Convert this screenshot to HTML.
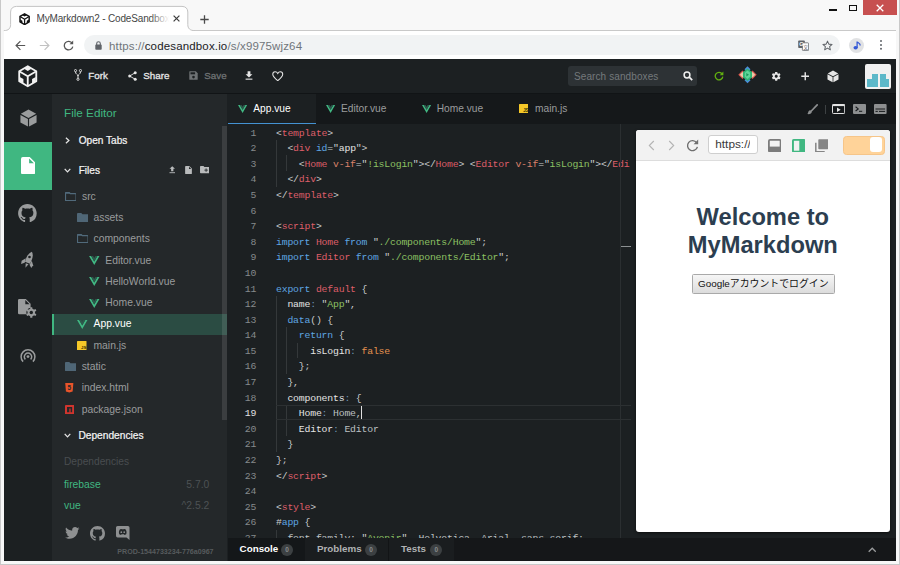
<!DOCTYPE html>
<html lang="ja">
<head>
<meta charset="utf-8">
<title>MyMarkdown2 - CodeSandbox</title>
<style>
*{box-sizing:border-box;margin:0;padding:0}
html,body{width:900px;height:565px;overflow:hidden;background:#fff}
body{font-family:"Liberation Sans","Noto Sans CJK JP",sans-serif;position:relative}
.abs{position:absolute}
#win{position:absolute;left:0;top:0;width:900px;height:565px;background:#f7f7f7;overflow:hidden}
#edgeL{left:0;top:0;width:1px;height:565px;background:#c9c9c9}
#edgeR{left:899px;top:0;width:1px;height:565px;background:#c9c9c9}
#edgeB{left:0;top:564px;width:900px;height:1px;background:#c9c9c9}
/* chrome */
#strip{left:1px;top:0;width:898px;height:31px;background:#f8f8f8}
#tab{left:10.5px;top:6px;width:177.5px;height:26px;background:#fff;border:1px solid #c3c3c3;border-bottom:none;border-radius:7px 7px 0 0}
#stripline{left:194px;top:30.200px;width:702px;height:1px;background:#c9c9c9}
#toolbar{left:4px;top:31.200px;width:892px;height:28px;background:#fff}
#omni{left:84px;top:35px;width:756px;height:20px;background:#f1f3f4;border-radius:10px}
.ctxt{font-size:10.5px;color:#444;white-space:nowrap;line-height:12px}
/* app */
#app{left:4px;top:59px;width:892px;height:502px;background:#1c2022;overflow:hidden}
#hdr{left:0;top:0;width:892px;height:35px;background:#1c2022;border-bottom:1px solid #111416}
.hbtn{font-size:9.8px;-webkit-text-stroke:0.3px currentColor;color:#e6e6e6;white-space:nowrap;line-height:12px}
#act{left:0;top:35px;width:48px;height:467px;background:#1c2022}
#actsel{left:0;top:82.8px;width:47.5px;height:47.800px;background:#40b781}
#side{left:47.500px;top:35px;width:175.500px;height:467px;background:#24282a}
#sbar{left:217.500px;top:66.600px;width:5.500px;height:294px;background:rgba(255,255,255,0.105)}
.st{font-size:10.35px;white-space:nowrap;line-height:12px;color:#9a9c9d}
.sh{font-size:10.1px;white-space:nowrap;line-height:12px;color:#f4f4f4;-webkit-text-stroke:0.22px currentColor}
#tabs{left:224px;top:35px;width:668px;height:29.7px;background:#15181a}
#atab{left:224px;top:35px;width:88px;height:29.7px;background:#1c2022;border-bottom:1.8px solid #4492d2}
.tt{font-size:10.2px;white-space:nowrap;line-height:12px;color:#9a9c9d}
#code{left:224px;top:65px;width:406.500px;height:414.200px;overflow:hidden;background:#1c2022}
.ln{position:absolute;left:0;width:28.1px;text-align:right;font:9.8px/15.59px "Liberation Mono",monospace;letter-spacing:-0.18px;color:#868a8c}
.cl{position:absolute;left:48px;font:9.8px/15.59px "Liberation Mono",monospace;letter-spacing:-0.18px;color:#d0d0d0;white-space:pre}
.ig{position:absolute;width:1px;background:#34383a}.p{color:#c8cbcc}.c{color:#6f95b5}.ln.cur{color:#e2e2e2}
.r{color:#de5e69}.b{color:#5fa6e2}.g{color:#8cc063}.o{color:#e5924f}.a{color:#d8806a}.w{color:#e4e4e4}.d{color:#bcc0c3}
#ruler{left:615.5px;top:65px;width:1px;height:414.2px;background:#2b2f31}
#prevwrap{left:626.5px;top:65px;width:265.5px;height:414.2px;background:#1c2022}
#prev{left:631.8px;top:70.800px;width:254.500px;height:402px;background:#fff;border-radius:3px;box-shadow:0 1px 3px rgba(0,0,0,.6);overflow:hidden}
#ptool{left:0;top:0;width:254px;height:31px;background:#f2f2f2;border-bottom:1px solid #ddd}
#bot{left:224px;top:479.200px;width:668px;height:22.800px;background:#151719}
.bt{font-size:9.800px;font-weight:bold;white-space:nowrap;line-height:12px;color:#b0b2b3}
.badge{width:12px;height:12px;border-radius:6px;background:#3c4042;color:#8a8d8f;font-size:6.500px;line-height:12px;text-align:center;font-weight:bold}
</style>
</head>
<body>
<div id="win">
<div class="abs" id="strip"></div>
<div class="abs" id="stripline"></div>
<svg class="abs" style="left:0;top:0" width="200" height="33" viewBox="0 0 200 33"><path d="M3.800 31.200 C8.500 31 10.600 28.500 10.600 24.500 V12 C10.600 8.500 13 6.400 16.500 6.400 H182 C185.500 6.400 187.800 8.500 187.800 12 V24.500 C187.800 28.500 190 31 194.600 31.200 V33 H3.800 Z" fill="#fff"/><path d="M3.800 30.700 C8.500 30.500 10.600 28.500 10.600 24.500 V12 C10.600 8.500 13 6.400 16.500 6.400 H182 C185.500 6.400 187.800 8.500 187.800 12 V24.500 C187.800 28.500 190 30.500 194.600 30.700" fill="none" stroke="#c4c4c4" stroke-width="1"/></svg>
<div class="abs" id="toolbar"></div>
<div class="abs" id="omni"></div>
<!--CHROME-->
<svg class="abs" style="left:19px;top:12.500px" width="11.200" height="12.400" viewBox="0 0 24 28"><path d="M12 1.800 L22.400 7.800 V20.200 L12 26.200 L1.600 20.200 V7.800 Z" fill="#fff" stroke="#111" stroke-width="3.200" stroke-linejoin="round"/><path d="M12 14 V26 M12 14 L1.800 8 M12 14 L22.200 8" stroke="#111" stroke-width="2.800" fill="none"/><path d="M12 2 L17 4.900 L12 8 L7 4.900 Z" fill="#111"/><path d="M2 14.500 L7 17.300 V23.500 L2 20.600 Z M22 14.500 L17 17.300 V23.500 L22 20.600 Z" fill="#111"/></svg>
<div class="abs ctxt" id="ttitle" style="left:36.5px;top:12.5px;width:132px;overflow:hidden;font-size:10px;letter-spacing:-0.17px;color:#454545">MyMarkdown2 - CodeSandbox</div>
<div class="abs" style="left:150px;top:10px;width:19px;height:18px;background:linear-gradient(90deg,rgba(255,255,255,0),#fff)"></div>
<svg class="abs" style="left:172.5px;top:15px" width="7" height="7" viewBox="0 0 7 7"><path d="M0.6 0.6 L6.4 6.4 M6.4 0.6 L0.6 6.4" stroke="#3c3c3c" stroke-width="1.2"/></svg>
<svg class="abs" style="left:200px;top:14.5px" width="9" height="9" viewBox="0 0 9 9"><path d="M4.5 0.3 V8.7 M0.3 4.5 H8.7" stroke="#4a4a4a" stroke-width="1.3"/></svg>
<!-- window controls -->
<div class="abs" style="left:829px;top:9.200px;width:8px;height:1.500px;background:#111"></div>
<div class="abs" style="left:848.5px;top:4.5px;width:8.800px;height:6.500px;border:1.100px solid #111;border-top-width:1.700px"></div>
<div class="abs" style="left:863px;top:0;width:33.5px;height:15px;background:#c75050"></div>
<svg class="abs" style="left:875.5px;top:4px" width="8" height="8" viewBox="0 0 8 8"><path d="M0.7 0.7 L7.3 7.3 M7.3 0.7 L0.7 7.3" stroke="#fff" stroke-width="1.3"/></svg>
<!-- nav -->
<svg class="abs" style="left:15px;top:40px" width="11" height="11" viewBox="0 0 11 11"><path d="M10.2 5.5 H1.3 M5.4 1.2 L1.1 5.5 L5.4 9.8" fill="none" stroke="#555" stroke-width="1.2"/></svg>
<svg class="abs" style="left:38.5px;top:40px" width="11" height="11" viewBox="0 0 11 11"><path d="M0.8 5.5 H9.7 M5.6 1.2 L9.9 5.5 L5.6 9.8" fill="none" stroke="#c2c2c2" stroke-width="1.2"/></svg>
<svg class="abs" style="left:62.5px;top:40px" width="11" height="11" viewBox="0 0 11 11"><path d="M9.2 3.2 A4.3 4.3 0 1 0 9.8 6.6" fill="none" stroke="#555" stroke-width="1.25"/><path d="M10.2 0.6 V4.3 H6.5 Z" fill="#555"/></svg>
<svg class="abs" style="left:94.5px;top:40.5px" width="7" height="9" viewBox="0 0 7 9"><rect x="0.3" y="3.6" width="6.4" height="5.2" rx="0.8" fill="#5f6368"/><path d="M1.7 4 V2.6 A1.8 1.8 0 0 1 5.3 2.6 V4" fill="none" stroke="#5f6368" stroke-width="1.1"/></svg>
<div class="abs ctxt" id="url" style="left:109px;top:39.5px;font-size:11.5px;letter-spacing:0.15px;color:#70757a">https://<span style="color:#202124">codesandbox.io</span>/s/x9975wjz64</div>
<!-- translate -->
<svg class="abs" style="left:797.5px;top:39.5px" width="11" height="11" viewBox="0 0 11 11"><rect x="0.2" y="0.4" width="6.6" height="7.6" rx="0.8" fill="#5f6368"/><rect x="4.4" y="2.8" width="6.2" height="7.8" rx="0.8" fill="#fff" stroke="#5f6368" stroke-width="0.8"/><text x="1.3" y="6.3" font-size="5.5" font-weight="bold" fill="#fff" font-family="Liberation Sans, sans-serif">G</text><text x="5.3" y="9" font-size="5" fill="#5f6368" font-family="Noto Sans CJK JP, sans-serif">文</text></svg>
<svg class="abs" style="left:821.5px;top:39.5px" width="11" height="11" viewBox="0 0 24 24"><path d="M12 2.5 L14.9 9 L22 9.7 L16.6 14.4 L18.2 21.4 L12 17.7 L5.8 21.4 L7.4 14.4 L2 9.7 L9.1 9 Z" fill="none" stroke="#5f6368" stroke-width="2.2" stroke-linejoin="round"/></svg>
<div class="abs" style="left:849px;top:37.5px;width:15px;height:15px;border-radius:8px;background:#e1e2e4"></div>
<svg class="abs" style="left:852.5px;top:40.5px" width="8" height="9" viewBox="0 0 8 9"><ellipse cx="2.6" cy="6.8" rx="2.1" ry="1.7" fill="#3559d6"/><path d="M4.1 7 V0.6 C4.6 2 7.3 1.6 7.2 4.4" fill="none" stroke="#3559d6" stroke-width="1.3"/></svg>
<div class="abs" style="left:879.5px;top:40.4px;width:2px;height:2px;border-radius:1px;background:#5f6368;box-shadow:0 3.9px 0 #5f6368,0 7.8px 0 #5f6368"></div>
<!--/CHROME-->
<div class="abs" id="app">
<div class="abs" id="hdr"></div>
<!--HEADER-->
<svg class="abs" style="left:14px;top:6px" width="19.500" height="22.500" viewBox="0 0 24 28"><path d="M12 1.600 L22.600 7.700 V20.300 L12 26.400 L1.400 20.300 V7.700 Z" fill="#1c2022" stroke="#f2f2f2" stroke-width="2.300" stroke-linejoin="round"/><path d="M12 14 V26 M12 14 L1.800 8 M12 14 L22.200 8" stroke="#f2f2f2" stroke-width="2.300" fill="none"/><path d="M12 2 L16.600 4.700 L12 7.600 L7.400 4.700 Z" fill="#f2f2f2"/><path d="M2 14.800 L6.600 17.400 V23 L2 20.400 Z M22 14.800 L17.400 17.400 V23 L22 20.400 Z" fill="#f2f2f2"/></svg>
<!-- fork -->
<svg class="abs" style="left:69.5px;top:10.300px" width="8" height="12" viewBox="0 0 8 12"><circle cx="1.5" cy="1.6" r="1.1" fill="none" stroke="#e6e6e6" stroke-width="0.9"/><circle cx="6.5" cy="1.6" r="1.1" fill="none" stroke="#e6e6e6" stroke-width="0.9"/><circle cx="4" cy="10.3" r="1.1" fill="none" stroke="#e6e6e6" stroke-width="0.9"/><path d="M1.5 2.8 C1.5 5.5 4 5 4 7.2 V9.2 M6.5 2.8 C6.5 5.5 4 5 4 7.2" fill="none" stroke="#e6e6e6" stroke-width="1"/></svg>
<div class="abs hbtn" id="hfork" style="left:84.3px;top:10.800px">Fork</div>
<!-- share -->
<svg class="abs" style="left:124px;top:11.800px" width="9" height="10" viewBox="0 0 9 10"><circle cx="7.2" cy="1.7" r="1.5" fill="#e6e6e6"/><circle cx="1.7" cy="5" r="1.5" fill="#e6e6e6"/><circle cx="7.2" cy="8.3" r="1.5" fill="#e6e6e6"/><path d="M7.2 1.7 L1.7 5 L7.2 8.3" fill="none" stroke="#e6e6e6" stroke-width="0.9"/></svg>
<div class="abs hbtn" id="hshare" style="left:139.3px;top:10.800px">Share</div>
<!-- save -->
<svg class="abs" style="left:184.5px;top:12.300px" width="9" height="9" viewBox="0 0 9 9"><path d="M0.8 0.3 H6.8 L8.7 2.2 V8.2 Q8.7 8.7 8.2 8.7 H0.8 Q0.3 8.7 0.3 8.2 V0.8 Q0.3 0.3 0.8 0.3 Z" fill="#6f7375"/><rect x="1.5" y="1.3" width="4.6" height="2" fill="#1c2022"/><circle cx="4.5" cy="6.1" r="1.3" fill="#1c2022"/></svg>
<div class="abs hbtn" id="hsave" style="left:200.3px;top:10.800px;color:#6f7375">Save</div>
<!-- download -->
<svg class="abs" style="left:241px;top:11.800px" width="8" height="9" viewBox="0 0 8 9"><path d="M2.6 0.3 H5.4 V3.3 H7.4 L4 6.6 L0.6 3.3 H2.6 Z" fill="#e6e6e6"/><rect x="0.6" y="7.6" width="6.8" height="1.1" fill="#e6e6e6"/></svg>
<!-- heart -->
<svg class="abs" style="left:268px;top:11.800px" width="11.500" height="10.500" viewBox="0 0 24 22"><path d="M12 20.3 C3 13 1.6 9.8 1.6 6.8 C1.6 3.6 4 1.6 6.6 1.6 C8.8 1.6 10.8 2.8 12 5 C13.2 2.8 15.2 1.6 17.4 1.6 C20 1.6 22.4 3.6 22.4 6.8 C22.4 9.8 21 13 12 20.3 Z" fill="none" stroke="#e6e6e6" stroke-width="2.2"/></svg>
<!-- search -->
<div class="abs" style="left:564.3px;top:6.8px;width:128.5px;height:20.4px;border-radius:3px;background:#2d3235"></div>
<div class="abs" id="hsearch" style="left:570px;top:11.5px;font-size:10px;line-height:12px;color:#74797c;white-space:nowrap;letter-spacing:0.1px">Search sandboxes</div>
<svg class="abs" style="left:678.5px;top:12px" width="10" height="10" viewBox="0 0 10 10"><circle cx="4" cy="4" r="2.9" fill="none" stroke="#f0f0f0" stroke-width="1.5"/><path d="M6.2 6.2 L9.2 9.2" stroke="#f0f0f0" stroke-width="1.7"/></svg>
<!-- refresh -->
<svg class="abs" style="left:709.5px;top:12px" width="10" height="10" viewBox="0 0 10 10"><path d="M8.2 3 A3.8 3.8 0 1 0 8.8 5.6" fill="none" stroke="#62b010" stroke-width="1.3"/><path d="M9.4 0.5 V4.2 H5.7 Z" fill="#62b010"/></svg>
<!-- patron diamond -->
<svg class="abs" style="left:734px;top:7px" width="19" height="17.5" viewBox="0 0 19 17.5"><path d="M9.5 0.3 L12.5 3.3 L9.5 6.3 L6.5 3.3 Z" fill="#4a8fd9"/><path d="M9.5 17.2 L12.5 14.2 L9.5 11.200 L6.500 14.200 Z" fill="#4a8fd9"/><path d="M0.3 8.75 L4.500 4.600 L8.600 8.750 L4.500 12.900 Z" fill="#d9584f"/><path d="M18.700 8.750 L14.500 4.600 L10.400 8.750 L14.500 12.900 Z" fill="#d9584f"/><path d="M1.800 8.750 L4.500 6.100 L7.100 8.750 L4.500 11.400 Z" fill="#e8c9a8"/><path d="M17.200 8.750 L14.500 6.100 L11.900 8.750 L14.500 11.400 Z" fill="#e8c9a8"/><path d="M9.5 2.600 L14 6 V11.500 L9.500 14.900 L5 11.500 V6 Z" fill="#2fb573"/><path d="M9.5 4.600 L12.200 6.800 V10.700 L9.500 12.900 L6.800 10.700 V6.800 Z" fill="#5fd69a"/><path d="M8.300 7 L11 8.750 L8.300 10.500 Z" fill="#1f9a5c"/></svg>
<!-- gear -->
<svg class="abs" style="left:767px;top:12px" width="10.5" height="10.5" viewBox="0 0 24 24"><path fill="#e6e6e6" d="M19.4 13c0-.3.1-.7.1-1s0-.7-.1-1l2.100-1.700c.2-.2.200-.400.100-.600l-2-3.500c-.100-.200-.400-.300-.600-.200l-2.500 1c-.5-.4-1.100-.700-1.700-1l-.400-2.600c0-.2-.2-.4-.5-.4h-4c-.300 0-.500.200-.500.400l-.400 2.600c-.600.300-1.200.6-1.700 1l-2.500-1c-.2-.1-.5 0-.6.2l-2 3.500c-.1.200-.1.500.1.600l2.100 1.700c0 .3-.1.700-.1 1s0 .7.100 1l-2.100 1.700c-.2.200-.2.400-.1.600l2 3.500c.1.200.4.300.6.200l2.500-1c.5.400 1.100.7 1.700 1l.4 2.600c0 .2.200.4.500.4h4c.3 0 .5-.2.500-.4l.4-2.600c.6-.3 1.200-.6 1.700-1l2.500 1c.2.100.5 0 .6-.2l2-3.500c.1-.2.1-.5-.1-.6L19.400 13zM12 15.500c-1.900 0-3.500-1.600-3.500-3.500s1.600-3.500 3.500-3.500 3.500 1.600 3.500 3.500-1.600 3.500-3.500 3.500z"/></svg>
<!-- plus -->
<svg class="abs" style="left:796.5px;top:13px" width="8.5" height="8.5" viewBox="0 0 9 9"><path d="M4.5 0.3 V8.700 M0.3 4.500 H8.700" stroke="#e6e6e6" stroke-width="1.5"/></svg>
<!-- cube -->
<svg class="abs" style="left:823px;top:11px" width="12" height="12.5" viewBox="0 0 24 25"><path d="M12 1 L22.500 6.800 L12 12.400 L1.500 6.800 Z" fill="#e6e6e6"/><path d="M1 8.500 L11.200 14 V24.600 L1 19 Z" fill="#e6e6e6"/><path d="M23 8.500 L12.800 14 V24.600 L23 19 Z" fill="#e6e6e6"/></svg>
<!-- avatar -->
<div class="abs" style="left:861px;top:4.6px;width:25.8px;height:25.6px;border-radius:2px;background:#f1f1f1"></div>
<div class="abs" style="left:863px;top:20px;width:5.2px;height:8.400px;background:#5cb8c9"></div>
<div class="abs" style="left:868px;top:15px;width:5.800px;height:13.4px;background:#5cb8c9"></div>
<div class="abs" style="left:876px;top:15px;width:5.600px;height:13.4px;background:#5cb8c9"></div>
<div class="abs" style="left:881.5px;top:20px;width:3.600px;height:8.4px;background:#5cb8c9"></div>
<!--/HEADER-->
<div class="abs" id="act"></div>
<div class="abs" id="actsel"></div>
<!--ACT-->
<svg class="abs" style="left:15.5px;top:50px" width="17" height="18" viewBox="0 0 24 25"><path d="M12 0.600 L22.800 6.600 L12 12.400 L1.200 6.600 Z" fill="#9a9c9d"/><path d="M0.600 8.200 L11.200 14 V24.600 L0.600 18.800 Z" fill="#9a9c9d"/><path d="M23.400 8.200 L12.800 14 V24.600 L23.400 18.800 Z" fill="#9a9c9d"/></svg>
<svg class="abs" style="left:16.8px;top:97.800px" width="14.2" height="17.400" viewBox="0 0 14 17"><path d="M1.800 0 H8.600 L14 5.400 V15.200 Q14 17 12.200 17 H1.800 Q0 17 0 15.200 V1.800 Q0 0 1.800 0 Z" fill="#fff"/><path d="M8 1.300 V6 H12.700 Z" fill="#40b781"/></svg>
<svg class="abs" style="left:14.2px;top:144.800px" width="18.800" height="18.600" viewBox="0 0 16 16"><path d="M8 0C3.58 0 0 3.58 0 8c0 3.54 2.29 6.53 5.47 7.59.4.07.55-.17.55-.38 0-.19-.01-.82-.01-1.49-2.01.37-2.53-.49-2.69-.94-.09-.23-.48-.94-.82-1.13-.28-.15-.68-.52-.01-.53.63-.01 1.08.58 1.24.82.72 1.21 1.87.87 2.33.66.07-.52.28-.87.51-1.07-1.78-.2-3.64-.89-3.64-3.95 0-.87.31-1.59.82-2.15-.08-.2-.36-1.02.08-2.12 0 0 .67-.21 2.2.82.64-.18 1.32-.27 2-.27.68 0 1.36.09 2 .27 1.53-1.04 2.2-.82 2.2-.82.44 1.1.16 1.92.08 2.12.51.56.82 1.27.82 2.15 0 3.07-1.87 3.75-3.65 3.95.29.25.54.73.54 1.48 0 1.07-.01 1.93-.01 2.2 0 .21.15.46.55.38A8.013 8.013 0 0016 8c0-4.42-3.58-8-8-8z" fill="#9a9c9d"/></svg>
<svg class="abs" style="left:16.500px;top:192.300px" width="15" height="18.500" viewBox="0 0 15 18.500"><g transform="rotate(22 7.500 9.250)" fill="#9a9c9d"><path d="M7.500 0 C10.300 2.600 10.800 6.600 10.200 12 H4.800 C4.200 6.600 4.700 2.600 7.500 0 Z"/><path d="M4.300 8.500 L1.300 12.200 L2 15.400 L4.900 13 Z"/><path d="M10.700 8.500 L13.700 12.200 L13 15.400 L10.100 13 Z"/><path d="M6 13 H9 L7.500 17.400 Z"/></g><circle cx="8.500" cy="6" r="1.300" fill="#1c2022"/></svg>
<svg class="abs" style="left:14.200px;top:239.800px" width="19" height="18.800" viewBox="0 0 19 18.800"><path d="M1.300 0 H7.800 L12.600 4.800 V9 C9.500 9 7.800 11.500 8.600 15.200 H1.300 Q0 15.200 0 13.900 V1.300 Q0 0 1.300 0 Z" fill="#9a9c9d"/><path d="M7.300 1 V5.300 H11.600 Z" fill="#1c2022"/><g transform="translate(13.300 13.500)"><g fill="#9a9c9d"><circle r="3.700"/><rect x="-1.100" y="-5.300" width="2.200" height="10.600" rx="0.500"/><rect x="-1.100" y="-5.300" width="2.200" height="10.600" rx="0.500" transform="rotate(60)"/><rect x="-1.100" y="-5.300" width="2.200" height="10.600" rx="0.500" transform="rotate(120)"/></g><circle r="1.700" fill="#1c2022"/></g></svg>
<svg class="abs" style="left:15.500px;top:289.200px" width="16" height="15" viewBox="0 0 16 15"><path d="M3.100 13.600 A6.900 6.900 0 1 1 12.900 13.600" fill="none" stroke="#9a9c9d" stroke-width="1.500"/><path d="M5.400 11.400 A3.700 3.700 0 1 1 10.600 11.400" fill="none" stroke="#9a9c9d" stroke-width="1.500"/><circle cx="8" cy="8.600" r="1.400" fill="#9a9c9d"/></svg>
<!--/ACT-->
<div class="abs" id="side"></div>
<!--SIDE-->
<div class="abs " id="fe" style="left:60.0px;top:48.2px;font-size:11.700px;line-height:12px;color:#40b781;white-space:nowrap">File Editor</div>
<svg class="abs" style="left:61.1px;top:78.0px" width="5" height="7" viewBox="0 0 5 7"><path d="M0.900 0.700 L3.900 3.500 L0.900 6.300" fill="none" stroke="#e6e6e6" stroke-width="1.250"/></svg>
<div class="abs sh" id="ot" style="left:74.7px;top:75.8px;">Open Tabs</div>
<svg class="abs" style="left:59.7px;top:109.0px" width="7" height="5" viewBox="0 0 7 5"><path d="M0.700 0.900 L3.500 3.900 L6.300 0.900" fill="none" stroke="#e6e6e6" stroke-width="1.250"/></svg>
<div class="abs sh" id="fl" style="left:74.7px;top:105.8px;">Files</div>
<svg class="abs" style="left:164.500px;top:107px" width="6.500" height="7.500" viewBox="0 0 8 9"><path d="M2.600 6.400 H5.400 V3.400 H7.400 L4 0.200 L0.600 3.400 H2.600 Z" fill="#b9bbbc"/><rect x="0.600" y="7.600" width="6.800" height="1.100" fill="#b9bbbc"/></svg>
<svg class="abs" style="left:180.500px;top:106.800px" width="7" height="8.200" viewBox="0 0 14 17"><path d="M1.800 0 H8.600 L14 5.400 V15.200 Q14 17 12.200 17 H1.800 Q0 17 0 15.200 V1.800 Q0 0 1.800 0 Z" fill="#b9bbbc"/><path d="M8 1.300 V6 H12.700 Z" fill="#24282a"/></svg>
<svg class="abs" style="left:196px;top:107.300px" width="9.300" height="7.300" viewBox="0 0 19 15"><path d="M1.500 0 H7 L9 2 H17.500 Q19 2 19 3.500 V13.500 Q19 15 17.500 15 H1.500 Q0 15 0 13.500 V1.500 Q0 0 1.500 0 Z" fill="#b9bbbc"/><path d="M12.500 5 V12 M9 8.500 H16" stroke="#24282a" stroke-width="1.800"/></svg>
<svg class="abs" style="left:60.8px;top:132.8px" width="11.600" height="9.200" viewBox="0 0 19 15"><path d="M1.800 0.800 H6.800 L8.800 2.800 H17.200 Q18.200 2.800 18.200 3.800 V13.200 Q18.200 14.200 17.200 14.200 H1.800 Q0.800 14.200 0.800 13.200 V1.800 Q0.800 0.800 1.800 0.800 Z" fill="none" stroke="#516a7b" stroke-width="2"/><path d="M1 1 H7 L9 3 H1 Z" fill="#516a7b"/></svg>
<div class="abs st" id="r0" style="left:78.0px;top:131.8px;">src</div>
<svg class="abs" style="left:72.7px;top:154.1px" width="11.600" height="9.200" viewBox="0 0 19 15"><path d="M1.500 0 H7 L9 2 H17.500 Q19 2 19 3.500 V13.500 Q19 15 17.500 15 H1.500 Q0 15 0 13.500 V1.500 Q0 0 1.500 0 Z" fill="#4f6676"/></svg>
<div class="abs st" id="r1" style="left:89.5px;top:153.1px;">assets</div>
<svg class="abs" style="left:72.7px;top:175.3px" width="11.600" height="9.200" viewBox="0 0 19 15"><path d="M1.800 0.800 H6.800 L8.800 2.800 H17.200 Q18.200 2.800 18.200 3.800 V13.200 Q18.200 14.200 17.200 14.200 H1.800 Q0.800 14.200 0.800 13.200 V1.800 Q0.800 0.800 1.800 0.800 Z" fill="none" stroke="#516a7b" stroke-width="2"/><path d="M1 1 H7 L9 3 H1 Z" fill="#516a7b"/></svg>
<div class="abs st" id="r2" style="left:89.5px;top:174.3px;">components</div>
<svg class="abs" style="left:85.0px;top:197.0px" width="10.5" height="9.1" viewBox="0 0 24 21"><path d="M0 0 H4.800 L12 12.500 L19.200 0 H24 L12 20.800 Z" fill="#41b883"/><path d="M4.800 0 H9.200 L12 4.900 L14.800 0 H19.200 L12 12.500 Z" fill="#2d5a4d"/></svg>
<div class="abs st" id="r3" style="left:101.3px;top:195.6px;">Editor.vue</div>
<svg class="abs" style="left:85.0px;top:218.3px" width="10.5" height="9.1" viewBox="0 0 24 21"><path d="M0 0 H4.800 L12 12.500 L19.200 0 H24 L12 20.800 Z" fill="#41b883"/><path d="M4.800 0 H9.200 L12 4.900 L14.800 0 H19.200 L12 12.500 Z" fill="#2d5a4d"/></svg>
<div class="abs st" id="r4" style="left:101.3px;top:216.9px;">HelloWorld.vue</div>
<svg class="abs" style="left:85.0px;top:239.6px" width="10.5" height="9.1" viewBox="0 0 24 21"><path d="M0 0 H4.800 L12 12.500 L19.200 0 H24 L12 20.800 Z" fill="#41b883"/><path d="M4.800 0 H9.200 L12 4.900 L14.800 0 H19.200 L12 12.500 Z" fill="#2d5a4d"/></svg>
<div class="abs st" id="r5" style="left:101.3px;top:238.2px;">Home.vue</div>
<div class="abs" style="left:47.500px;top:255.2px;width:175.500px;height:20.400px;background:#2b4c43;border-left:2px solid #40b781"></div>
<svg class="abs" style="left:73.4px;top:260.9px" width="10.5" height="9.1" viewBox="0 0 24 21"><path d="M0 0 H4.800 L12 12.500 L19.200 0 H24 L12 20.800 Z" fill="#41b883"/><path d="M4.800 0 H9.200 L12 4.900 L14.800 0 H19.200 L12 12.500 Z" fill="#2d5a4d"/></svg>
<div class="abs st" id="r6" style="left:89.5px;top:259.4px;color:#fff">App.vue</div>
<svg class="abs" style="left:73.4px;top:281.9px" width="9.5" height="9.5" viewBox="0 0 10 10"><rect width="10" height="10" rx="0.600" fill="#f5c828"/><text x="4.300" y="8.600" font-size="4.600" font-weight="bold" font-family="Liberation Sans, sans-serif" fill="#3a3000">JS</text></svg>
<div class="abs st" id="r7" style="left:89.5px;top:280.7px;">main.js</div>
<svg class="abs" style="left:60.6px;top:303.0px" width="11.600" height="9.200" viewBox="0 0 19 15"><path d="M1.500 0 H7 L9 2 H17.500 Q19 2 19 3.500 V13.500 Q19 15 17.500 15 H1.500 Q0 15 0 13.500 V1.500 Q0 0 1.500 0 Z" fill="#4f6676"/></svg>
<div class="abs st" id="r8" style="left:77.7px;top:302.0px;">static</div>
<svg class="abs" style="left:61.2px;top:324.3px" width="8.600" height="9.800" viewBox="0 0 18 20"><path d="M0.500 0 H17.500 L16 17.300 L9 19.600 L2 17.300 Z" fill="#e8542a"/><text x="5.300" y="14.800" font-size="13.500" font-weight="bold" font-family="Liberation Sans, sans-serif" fill="#24282a">5</text></svg>
<div class="abs st" id="r9" style="left:77.7px;top:323.2px;">index.html</div>
<svg class="abs" style="left:61.2px;top:345.9px" width="9.200" height="9.200" viewBox="0 0 10 10"><rect width="10" height="10" rx="0.500" fill="#d0352e"/><path d="M2.200 2.200 H7.800 V7.800 H6.100 V3.900 H4.700 V7.800 H2.200 Z" fill="#24282a"/></svg>
<div class="abs st" id="r10" style="left:77.7px;top:344.5px;">package.json</div>
<svg class="abs" style="left:59.7px;top:374.0px" width="7" height="5" viewBox="0 0 7 5"><path d="M0.700 0.900 L3.500 3.900 L6.300 0.900" fill="none" stroke="#e6e6e6" stroke-width="1.250"/></svg>
<div class="abs sh" id="dh" style="left:74.4px;top:370.6px;font-size:10.200px">Dependencies</div>
<div class="abs st" id="dd" style="left:60.0px;top:396.7px;color:#494d50;font-size:10.200px">Dependencies</div>
<div class="abs st" id="fb" style="left:60.0px;top:419.8px;color:#40b781">firebase</div>
<div class="abs st" id="fbv" style="left:150px;width:55.300px;text-align:right;top:419.8px;color:#4d5254">5.7.0</div>
<div class="abs st" id="vu" style="left:60.0px;top:441.1px;color:#40b781">vue</div>
<div class="abs st" id="vuv" style="left:150px;width:55.300px;text-align:right;top:441.1px;color:#4d5254">^2.5.2</div>
<svg class="abs" style="left:61px;top:468px" width="14.500" height="12" viewBox="0 0 24 20"><path d="M24 2.400c-.900.400-1.800.700-2.800.800 1-.600 1.800-1.600 2.200-2.700-1 .600-2 1-3.100 1.200C19.400.700 18.100.100 16.700.100c-2.700 0-4.900 2.200-4.900 4.900 0 .400 0 .800.100 1.100C7.800 5.900 4.200 4 1.700 1 1.300 1.700 1 2.600 1 3.500c0 1.700.900 3.200 2.200 4.100-.800 0-1.600-.200-2.200-.600v.100c0 2.400 1.700 4.400 3.900 4.800-.400.100-.800.200-1.300.200-.300 0-.600 0-.900-.100.600 2 2.400 3.400 4.600 3.400-1.700 1.300-3.800 2.100-6.100 2.100-.400 0-.800 0-1.200-.100 2.200 1.400 4.800 2.200 7.500 2.200 9.100 0 14-7.500 14-14v-.600c1-.700 1.800-1.600 2.500-2.600z" fill="#8e9091"/></svg>
<svg class="abs" style="left:86px;top:466.500px" width="15" height="15" viewBox="0 0 16 16"><path d="M8 0C3.58 0 0 3.58 0 8c0 3.54 2.29 6.53 5.47 7.59.4.07.55-.17.55-.38 0-.19-.01-.82-.01-1.49-2.01.37-2.53-.49-2.69-.94-.09-.23-.48-.94-.82-1.13-.28-.15-.68-.52-.01-.53.63-.01 1.08.58 1.24.82.72 1.21 1.87.87 2.33.66.07-.52.28-.87.51-1.07-1.78-.2-3.64-.89-3.64-3.95 0-.87.31-1.59.82-2.15-.08-.2-.36-1.02.08-2.12 0 0 .67-.21 2.2.82.64-.18 1.32-.27 2-.27.68 0 1.36.09 2 .27 1.53-1.04 2.2-.82 2.2-.82.44 1.1.16 1.92.08 2.12.51.56.82 1.27.82 2.15 0 3.07-1.87 3.75-3.65 3.95.29.25.54.73.54 1.48 0 1.07-.01 1.93-.01 2.2 0 .21.15.46.55.38A8.013 8.013 0 0016 8c0-4.42-3.58-8-8-8z" fill="#8e9091"/></svg>
<svg class="abs" style="left:112px;top:467px" width="13.500" height="14" viewBox="0 0 13.500 14"><path d="M1.600 0 H11.900 Q13.500 0 13.500 1.600 V14 L10.500 11.400 H1.600 Q0 11.400 0 9.800 V1.600 Q0 0 1.600 0 Z" fill="#8e9091"/><path d="M3.300 8.200 C2.600 6.300 3 4.500 3.800 3.400 C4.600 3 5.300 2.900 5.600 2.900 L5.800 3.300 H7.700 L7.900 2.900 C8.200 2.900 8.900 3 9.700 3.400 C10.500 4.500 10.900 6.300 10.200 8.200 C9.500 8.700 8.800 8.900 8.400 8.900 L8 8.300 H5.500 L5.100 8.900 C4.700 8.900 4 8.700 3.300 8.200 Z" fill="#24282a"/><circle cx="5.300" cy="6.200" r="0.850" fill="#8e9091"/><circle cx="8.200" cy="6.200" r="0.850" fill="#8e9091"/></svg>
<div class="abs" id="prod" style="left:113.300px;top:488.7px;font-size:7.1px;line-height:8px;font-weight:bold;color:#575b5d;white-space:nowrap">PROD-1544733234-776a0967</div>
<!--/SIDE-->
<div class="abs" id="sbar"></div>
<div class="abs" id="tabs"></div>
<div class="abs" id="atab"></div>
<!--TABS-->
<svg class="abs" style="left:234.3px;top:45.5px" width="9.2" height="8" viewBox="0 0 24 21"><path d="M0 0 H4.800 L12 12.500 L19.200 0 H24 L12 20.800 Z" fill="#41b883"/><path d="M4.800 0 H9.200 L12 4.900 L14.800 0 H19.200 L12 12.500 Z" fill="#2d5a4d"/></svg>
<div class="abs tt" id="t1" style="left:249.300px;top:43.500px;color:#fff">App.vue</div>
<svg class="abs" style="left:322px;top:45.500px" width="9.200" height="8" viewBox="0 0 24 21"><path d="M0 0 H4.800 L12 12.500 L19.200 0 H24 L12 20.800 Z" fill="#41b883"/><path d="M4.800 0 H9.200 L12 4.900 L14.800 0 H19.200 L12 12.500 Z" fill="#2d5a4d"/></svg>
<div class="abs tt" id="t2" style="left:337px;top:43.500px">Editor.vue</div>
<svg class="abs" style="left:417.700px;top:45.500px" width="9.200" height="8" viewBox="0 0 24 21"><path d="M0 0 H4.800 L12 12.500 L19.200 0 H24 L12 20.800 Z" fill="#41b883"/><path d="M4.800 0 H9.200 L12 4.900 L14.800 0 H19.200 L12 12.500 Z" fill="#2d5a4d"/></svg>
<div class="abs tt" id="t3" style="left:432.700px;top:43.500px">Home.vue</div>
<svg class="abs" style="left:514.600px;top:44.800px" width="9.600" height="9.600" viewBox="0 0 10 10"><rect width="10" height="10" rx="0.600" fill="#f5c828"/><text x="4.300" y="8.600" font-size="4.600" font-weight="bold" font-family="Liberation Sans, sans-serif" fill="#3a3000">JS</text></svg>
<div class="abs tt" id="t4" style="left:531px;top:43.500px">main.js</div>
<!-- right icons -->
<svg class="abs" style="left:802.500px;top:45.300px" width="11" height="10.500" viewBox="0 0 11 10.500"><path d="M10.200 0.900 L4.300 7" stroke="#8d8f90" stroke-width="1.700" stroke-linecap="round"/><path d="M3.300 6.300 L4.800 7.800 C4.800 9.900 2.600 10.500 0.200 10.100 C1.400 9.500 0.900 8.200 1.600 7.200 C2.100 6.500 2.800 6.200 3.300 6.300 Z" fill="#8d8f90"/></svg>
<div class="abs" style="left:820.700px;top:46px;width:1px;height:9px;background:#3d4143"></div>
<svg class="abs" style="left:828px;top:45.300px" width="13.200" height="10" viewBox="0 0 13.200 10"><rect x="0.500" y="0.500" width="12.200" height="9" rx="0.800" fill="none" stroke="#e4e4e4" stroke-width="1"/><rect x="0.500" y="0.300" width="12.200" height="1.800" fill="#e4e4e4"/><path d="M5 3.600 V7.900 L8.700 5.750 Z" fill="#e4e4e4"/></svg>
<svg class="abs" style="left:849px;top:45.300px" width="13" height="10" viewBox="0 0 13 10"><rect width="13" height="10" rx="1" fill="#8d8f90"/><path d="M2.600 2.800 L5.200 4.900 L2.600 7" fill="none" stroke="#16191b" stroke-width="1.100"/><path d="M6 7.300 H9.200" stroke="#16191b" stroke-width="1"/></svg>
<svg class="abs" style="left:870px;top:45.300px" width="12.600" height="10" viewBox="0 0 12.600 10"><rect width="12.600" height="10" rx="1" fill="#8d8f90"/><path d="M1.500 5 H11.100 M1.500 7.400 H3.800 M5 7.400 H11.100" stroke="#16191b" stroke-width="1"/></svg>
<!--/TABS-->
<div class="abs" id="code">
<!--CODE-->
<div class="ln" style="top:1.60px">1</div>
<div class="cl" style="top:1.60px"><span class="p">&lt;</span><span class="r">template</span><span class="p">&gt;</span></div>
<div class="ln" style="top:17.19px">2</div>
<div class="cl" style="top:17.19px"><span class="p">  &lt;</span><span class="r">div</span><span class="p"> </span><span class="b">id</span><span class="p">="</span><span class="w">app</span><span class="p">"&gt;</span></div>
<div class="ln" style="top:32.78px">3</div>
<div class="cl" style="top:32.78px"><span class="p">    &lt;</span><span class="r">Home</span><span class="p"> </span><span class="a">v-if</span><span class="p">="</span><span class="g">!isLogin</span><span class="p">"&gt;&lt;/</span><span class="r">Home</span><span class="p">&gt; &lt;</span><span class="r">Editor</span><span class="p"> </span><span class="a">v-if</span><span class="p">="</span><span class="g">isLogin</span><span class="p">"&gt;&lt;/</span><span class="r">Edi</span></div>
<div class="ln" style="top:48.37px">4</div>
<div class="cl" style="top:48.37px"><span class="p">  &lt;/</span><span class="r">div</span><span class="p">&gt;</span></div>
<div class="ln" style="top:63.96px">5</div>
<div class="cl" style="top:63.96px"><span class="p">&lt;/</span><span class="r">template</span><span class="p">&gt;</span></div>
<div class="ln" style="top:79.55px">6</div>
<div class="ln" style="top:95.14px">7</div>
<div class="cl" style="top:95.14px"><span class="p">&lt;</span><span class="r">script</span><span class="p">&gt;</span></div>
<div class="ln" style="top:110.73px">8</div>
<div class="cl" style="top:110.73px"><span class="b">import</span><span class="p"> </span><span class="r">Home</span><span class="p"> </span><span class="b">from</span><span class="p"> "</span><span class="g">./components/Home</span><span class="p">";</span></div>
<div class="ln" style="top:126.32px">9</div>
<div class="cl" style="top:126.32px"><span class="b">import</span><span class="p"> </span><span class="r">Editor</span><span class="p"> </span><span class="b">from</span><span class="p"> "</span><span class="g">./components/Editor</span><span class="p">";</span></div>
<div class="ln" style="top:141.91px">10</div>
<div class="ln" style="top:157.50px">11</div>
<div class="cl" style="top:157.50px"><span class="b">export</span><span class="p"> </span><span class="r">default</span><span class="p"> {</span></div>
<div class="ln" style="top:173.09px">12</div>
<div class="cl" style="top:173.09px"><span class="w">  name</span><span class="c">:</span><span class="p"> "</span><span class="g">App</span><span class="p">",</span></div>
<div class="ln" style="top:188.68px">13</div>
<div class="cl" style="top:188.68px"><span class="b">  data</span><span class="p">() {</span></div>
<div class="ln" style="top:204.27px">14</div>
<div class="cl" style="top:204.27px"><span class="b">    return</span><span class="p"> {</span></div>
<div class="ln" style="top:219.86px">15</div>
<div class="cl" style="top:219.86px"><span class="w">      isLogin</span><span class="c">: </span><span class="o">false</span></div>
<div class="ln" style="top:235.45px">16</div>
<div class="cl" style="top:235.45px"><span class="p">    };</span></div>
<div class="ln" style="top:251.04px">17</div>
<div class="cl" style="top:251.04px"><span class="p">  },</span></div>
<div class="ln" style="top:266.63px">18</div>
<div class="cl" style="top:266.63px"><span class="w">  components</span><span class="c">:</span><span class="p"> {</span></div>
<div class="ln cur" style="top:282.22px">19</div>
<div class="cl" style="top:282.22px"><span class="w">    Home</span><span class="c">: </span><span class="d">Home,</span></div>
<div class="ln" style="top:297.81px">20</div>
<div class="cl" style="top:297.81px"><span class="w">    Editor</span><span class="c">: </span><span class="d">Editor</span></div>
<div class="ln" style="top:313.40px">21</div>
<div class="cl" style="top:313.40px"><span class="p">  }</span></div>
<div class="ln" style="top:328.99px">22</div>
<div class="cl" style="top:328.99px"><span class="p">};</span></div>
<div class="ln" style="top:344.58px">23</div>
<div class="cl" style="top:344.58px"><span class="p">&lt;/</span><span class="r">script</span><span class="p">&gt;</span></div>
<div class="ln" style="top:360.17px">24</div>
<div class="ln" style="top:375.76px">25</div>
<div class="cl" style="top:375.76px"><span class="p">&lt;</span><span class="r">style</span><span class="p">&gt;</span></div>
<div class="ln" style="top:391.35px">26</div>
<div class="cl" style="top:391.35px"><span class="p">#</span><span class="b">app</span><span class="p"> {</span></div>
<div class="ln" style="top:406.94px">27</div>
<div class="cl" style="top:406.94px"><span class="d">  font-family</span><span class="p">: "</span><span class="g">Avenir</span><span class="p">", </span><span class="d">Helvetica, Arial, sans-serif;</span></div>
<div class="ig" style="left:47.5px;top:15.89px;height:46.77px"></div>
<div class="ig" style="left:58.2px;top:31.48px;height:15.59px"></div>
<div class="ig" style="left:47.5px;top:171.79px;height:155.90px"></div>
<div class="ig" style="left:58.2px;top:202.97px;height:46.77px"></div>
<div class="ig" style="left:68.6px;top:218.56px;height:15.59px"></div>
<div class="ig" style="left:58.2px;top:280.92px;height:31.18px"></div>
<div class="ig" style="left:47.5px;top:405.64px;height:15.59px"></div>
<div class="abs" style="left:47.800px;top:280.62px;width:360px;height:15.600px;border-top:1px solid #2c3032;border-bottom:1px solid #2c3032"></div>
<div class="abs" style="left:133.200px;top:281.82px;width:1px;height:13.500px;background:#e0e0e0"></div>
<!--/CODE-->
</div>
<div class="abs" id="ruler"></div>
<div class="abs" style="left:616.500px;top:186.600px;width:10px;height:1.300px;background:#8c9092"></div>
<div class="abs" id="prevwrap"></div>
<div class="abs" id="prev">
<div class="abs" id="ptool"></div>
<!--PREV-->
<svg class="abs" style="left:12.500px;top:10px" width="7" height="11" viewBox="0 0 7 11"><path d="M5.800 1 L1.300 5.500 L5.800 10" fill="none" stroke="#b4b4b4" stroke-width="1.100"/></svg>
<svg class="abs" style="left:32px;top:10px" width="7" height="11" viewBox="0 0 7 11"><path d="M1.200 1 L5.700 5.500 L1.200 10" fill="none" stroke="#b4b4b4" stroke-width="1.100"/></svg>
<svg class="abs" style="left:50px;top:9px" width="13" height="13" viewBox="0 0 13 13"><path d="M10.600 3.700 A5 5 0 1 0 11.400 7.800" fill="none" stroke="#6f6f6f" stroke-width="1.400"/><path d="M12.200 0.600 V5.200 H7.600 Z" fill="#6f6f6f"/></svg>
<div class="abs" style="left:72.300px;top:5.600px;width:50px;height:18.900px;background:#fff;border:1px solid #cfcfcf;border-radius:3px"><div id="purl" style="position:absolute;left:6.200px;top:1.900px;width:34.500px;overflow:hidden;font-size:11.800px;line-height:13px;color:#3a3a3a;white-space:nowrap">https://x9975wjz64.codesandbox.io/</div></div>
<svg class="abs" style="left:132px;top:9px" width="13.500" height="13.500" viewBox="0 0 13.500 13.500"><rect x="0.900" y="0.900" width="11.700" height="11.700" rx="1.200" fill="none" stroke="#7c7c7c" stroke-width="1.800"/><rect x="0.900" y="7.600" width="11.700" height="5" fill="#7c7c7c"/></svg>
<svg class="abs" style="left:156.100px;top:9px" width="13.500" height="13.500" viewBox="0 0 13.500 13.500"><rect width="13.500" height="13.500" rx="1.600" fill="#40b781"/><rect x="1.900" y="1.800" width="5.400" height="9.900" fill="#f2f2f2"/></svg>
<svg class="abs" style="left:179px;top:9px" width="13.500" height="13.500" viewBox="0 0 13.500 13.500"><rect x="3.300" y="0.200" width="10" height="10" rx="0.800" fill="#858585"/><path d="M0.800 3.800 V12.700 H9.700" fill="none" stroke="#858585" stroke-width="1.500"/></svg>
<div class="abs" style="left:207px;top:6.200px;width:41.800px;height:19.200px;border-radius:3.500px;background:#ffd399;border:1px solid #f6c589"></div>
<div class="abs" style="left:234.300px;top:7.100px;width:12px;height:15px;border-radius:3px;background:#fff"></div>
<div class="abs" id="h1" style="left:0;top:74.700px;width:254px;text-align:center;font-size:23.700px;line-height:27.300px;font-weight:bold;color:#2c3e50">Welcome to<br>MyMarkdown</div>
<div class="abs" id="gbtn" style="left:56px;top:144.400px;width:143px;height:19.500px;background:linear-gradient(#f6f6f6,#dcdcdc);border:1px solid #a9a9a9;border-radius:1.500px;text-align:center;font-size:9.900px;line-height:17.300px;color:#111;white-space:nowrap"><span id="gtxt">Googleアカウントでログイン</span></div>
<!--/PREV-->
</div>
<div class="abs" id="bot"></div>
<!--BOT-->
<div class="abs" style="left:224px;top:479.200px;width:76.500px;height:22.800px;background:#141719"></div>
<div class="abs" style="left:300.500px;top:479.200px;width:84.500px;height:22.800px;background:#1a1d1f;border-right:1px solid #121416"></div>
<div class="abs" style="left:385px;top:479.200px;width:64.500px;height:22.800px;background:#1a1d1f"></div>
<div class="abs bt" id="b1" style="left:235.600px;top:484.400px;color:#fff">Console</div>
<div class="abs badge" style="left:277px;top:484.700px">0</div>
<div class="abs bt" id="b2" style="left:313px;top:484.400px">Problems</div>
<div class="abs badge" style="left:361px;top:484.700px">0</div>
<div class="abs bt" id="b3" style="left:397px;top:484.400px">Tests</div>
<div class="abs badge" style="left:426.300px;top:484.700px">0</div>
<svg class="abs" style="left:863.500px;top:488px" width="8.500" height="5.500" viewBox="0 0 8.500 5.500"><path d="M0.700 4.800 L4.250 1.200 L7.800 4.800" fill="none" stroke="#9a9c9d" stroke-width="1.300"/></svg>
<!--/BOT-->
</div>
<div class="abs" id="edgeL"></div><div class="abs" id="edgeR"></div><div class="abs" id="edgeB"></div>
</div>
</body>
</html>
